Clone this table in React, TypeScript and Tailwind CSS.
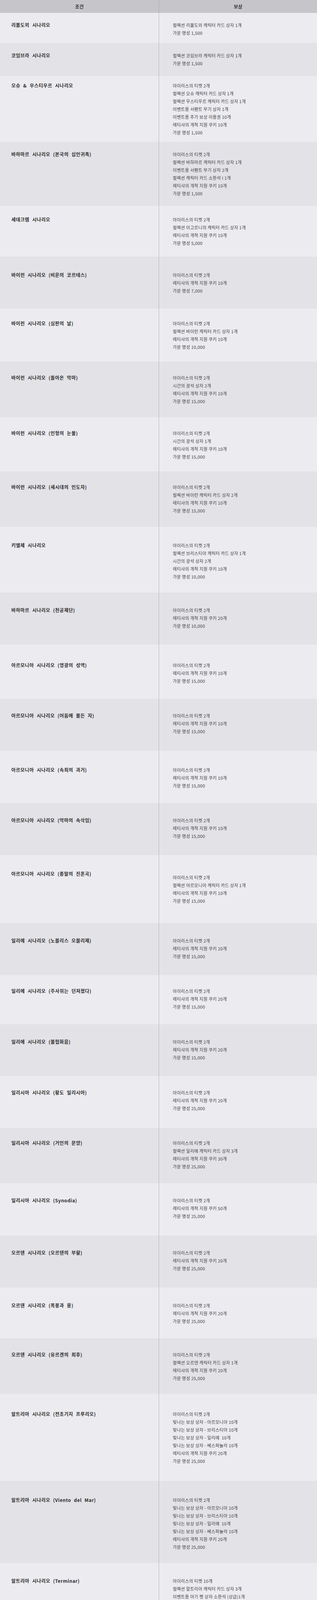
import React from "react";

type Row = { t: string; h: string; lt: string; rt?: string; l: string[] };

const T2 = "아이리스의 티켓 2개";
const C = (n: string) => `레티샤의 개척 지원 쿠키 ${n}개`;
const F = (n: string) => `가문 명성 ${n}`;

const rows: Row[] = [
  { t: "리볼도외 시나리오", h: "h-[77px]", lt: "pt-[21px]", l: ["컬렉션 리볼도외 캐릭터 카드 상자 1개", F("1,500")] },
  { t: "코임브라 시나리오", h: "h-[85px]", lt: "pt-[22px]", l: ["컬렉션 코임브라 캐릭터 카드 상자 1개", F("1,500")] },
  {
    t: "오슈 & 우스티우르 시나리오",
    h: "h-[168px]",
    lt: "pt-[14px]",
    l: [T2, "컬렉션 오슈 캐릭터 카드 상자 1개", "컬렉션 우스티우르 캐릭터 카드 상자 1개", "이벤트용 서펜트 무기 상자 1개", "이벤트용 추가 보상 이용권 10개", C("10"), F("1,500")],
  },
  {
    t: "바하마르 시나리오 (본국의 십인귀족)",
    h: "h-[164px]",
    lt: "pt-[22px]",
    l: [T2, "컬렉션 바하마르 캐릭터 카드 상자 1개", "이벤트용 서펜트 무기 상자 2개", "컬렉션 캐릭터 카드 소환석 I 1개", C("10"), F("1,500")],
  },
  { t: "세데크렘 시나리오", h: "h-[130px]", lt: "pt-[25px]", l: [T2, "컬렉션 이고르니의 캐릭터 카드 상자 1개", C("10"), F("5,000")] },
  { t: "바이런 시나리오 (비운의 코르테스)", h: "h-[133px]", lt: "pt-[37px]", l: [T2, C("10"), F("7,000")] },
  { t: "바이런 시나리오 (심판의 날)", h: "h-[136px]", lt: "pt-[28px]", l: [T2, "컬렉션 바이런 캐릭터 카드 상자 1개", C("10"), F("10,000")] },
  { t: "바이런 시나리오 (돌아온 악마)", h: "h-[142px]", lt: "pt-[31px]", l: [T2, "시간의 광석 상자 2개", C("10"), F("15,000")] },
  { t: "바이런 시나리오 (인형의 눈물)", h: "h-[139px]", lt: "pt-[31px]", l: [T2, "시간의 광석 상자 1개", C("10"), F("15,000")] },
  { t: "바이런 시나리오 (새시대의 인도자)", h: "h-[142px]", lt: "pt-[30px]", l: [T2, "컬렉션 바이런 캐릭터 카드 상자 2개", C("10"), F("15,000")] },
  { t: "키엘체 시나리오", h: "h-[168px]", lt: "pt-[37px]", l: [T2, "컬렉션 브리스티아 캐릭터 카드 상자 1개", "시간의 광석 상자 2개", C("10"), F("10,000")] },
  { t: "바하마르 시나리오 (천공제단)", h: "h-[133px]", lt: "pt-[35px]", l: [T2, C("20"), F("10,000")] },
  { t: "아르모니아 시나리오 (영광의 성역)", h: "h-[139px]", lt: "pt-[43px]", l: [T2, C("10"), F("15,000")] },
  { t: "아르모니아 시나리오 (어둠에 물든 자)", h: "h-[133px]", lt: "pt-[33px]", l: [T2, C("10"), F("15,000")] },
  { t: "아르모니아 시나리오 (속죄의 과거)", h: "h-[134px]", lt: "pt-[39px]", l: [T2, C("10"), F("15,000")] },
  { t: "아르모니아 시나리오 (악마의 속삭임)", h: "h-[133px]", lt: "pt-[34px]", l: [T2, C("10"), F("15,000")] },
  { t: "아르모니아 시나리오 (종말의 진혼곡)", h: "h-[174px]", lt: "pt-[38px]", rt: "pt-[47px]", l: [T2, "컬렉션 아르모니아 캐릭터 카드 상자 1개", C("10"), F("15,000")] },
  { t: "일리에 시나리오 (노블리스 오블리제)", h: "h-[133px]", lt: "pt-[35px]", l: [T2, C("20"), F("15,000")] },
  { t: "일리에 시나리오 (주사위는 던져졌다)", h: "h-[126px]", lt: "pt-[31px]", l: [T2, C("20"), F("15,000")] },
  { t: "일리에 시나리오 (불협화음)", h: "h-[133px]", lt: "pt-[35px]", l: [T2, C("20"), F("15,000")] },
  { t: "일리시아 시나리오 (황도 일리시아)", h: "h-[132px]", lt: "pt-[32px]", l: [T2, C("20"), F("25,000")] },
  { t: "일리시아 시나리오 (거인의 문양)", h: "h-[142px]", lt: "pt-[29px]", l: [T2, "컬렉션 일리에 캐릭터 카드 상자 3개", C("30"), F("25,000")] },
  { t: "일리시아 시나리오 (Synodia)", h: "h-[134px]", lt: "pt-[34px]", l: [T2, C("50"), F("25,000")] },
  { t: "오르덴 시나리오 (오르덴의 부활)", h: "h-[133px]", lt: "pt-[34px]", l: [T2, C("20"), F("25,000")] },
  { t: "오르덴 시나리오 (폭풍과 용)", h: "h-[130px]", lt: "pt-[36px]", l: [T2, C("20"), F("25,000")] },
  { t: "오르덴 시나리오 (유르겐의 최후)", h: "h-[142px]", lt: "pt-[32px]", l: [T2, "컬렉션 오르덴 캐릭터 카드 상자 1개", C("20"), F("25,000")] },
  {
    t: "알트리아 시나리오 (전초기지 프루리오)",
    h: "h-[223px]",
    lt: "pt-[42px]",
    l: [T2, "빛나는 보상 상자 - 아르모니아 10개", "빛나는 보상 상자 - 브리스티아 10개", "빛나는 보상 상자 - 일리에\u00a0\u00a010개", "빛나는 보상 상자 - 베스파뇰라 10개", C("20"), F("25,000")],
  },
  {
    t: "알트리아 시나리오 (Viento del Mar)",
    h: "h-[210px]",
    lt: "pt-[39px]",
    l: [T2, "빛나는 보상 상자 - 아르모니아 10개", "빛나는 보상 상자 - 브리스티아 10개", "빛나는 보상 상자 - 일리에\u00a0\u00a010개", "빛나는 보상 상자 - 베스파뇰라 10개", C("20"), F("25,000")],
  },
  {
    t: "알트리아 시나리오 (Terminar)",
    h: "h-[252px]",
    lt: "pt-[36px]",
    l: [
      "아이리스의 티켓 10개",
      "컬렉션 알트리아 캐릭터 카드 상자 3개",
      "이벤트용 아기 펫 상자 소환석 (상급)1개",
      "빛나는 보상 상자 - 아르모니아 10개",
      "빛나는 보상 상자 - 브리스티아 10개",
      "빛나는 보상 상자 - 일리에 10개",
      "빛나는 보상 상자 - 베스파뇰라 10개",
      C("50"),
      F("50,000"),
    ],
  },
  {
    t: "왜곡된 아르모니아 시나리오 (Reanudacion)",
    h: "h-[191px]",
    lt: "pt-[35px]",
    l: ["컬렉션 아르모니아 캐릭터 카드 상자 3개", "아비스 아르마 무기 레시피 조각 50개", "아비스 아르마 악세서리 레시피 조각 1개", C("50"), F("50,000")],
  },
];

export default function App() {
  return (
    <div className="w-[811px] bg-[#ecebf0] font-['Noto_Sans_CJK_KR','Noto_Sans',sans-serif]">
      <div className="grid grid-cols-[406px_1fr] h-[33px] bg-[#c6c5ca] text-[12px] font-bold text-[#333]">
        <div className="flex items-center justify-center">조건</div>
        <div className="flex items-center justify-center border-l border-[#a9a9ad]">보상</div>
      </div>
      {rows.map((r, i) => (
        <div
          key={i}
          className={`grid grid-cols-[406px_1fr] ${r.h} ${i % 2 === 0 ? "bg-[#ecebf0]" : "bg-[#e3e2e7]"}`}
        >
          <div className={`pl-[29px] ${r.lt} text-[12px] leading-[20px] font-bold tracking-[0.5px] [word-spacing:4px] text-[#2f2f2f] whitespace-nowrap`}>
            {r.t}
          </div>
          <div className={`border-l border-[#b4b4b8] pl-[35px] ${r.rt ?? r.lt} text-[11px] leading-[20px] tracking-[0.3px] text-[#444] whitespace-nowrap`}>
            {r.l.map((line, j) => (
              <div key={j}>{line}</div>
            ))}
          </div>
        </div>
      ))}
    </div>
  );
}
